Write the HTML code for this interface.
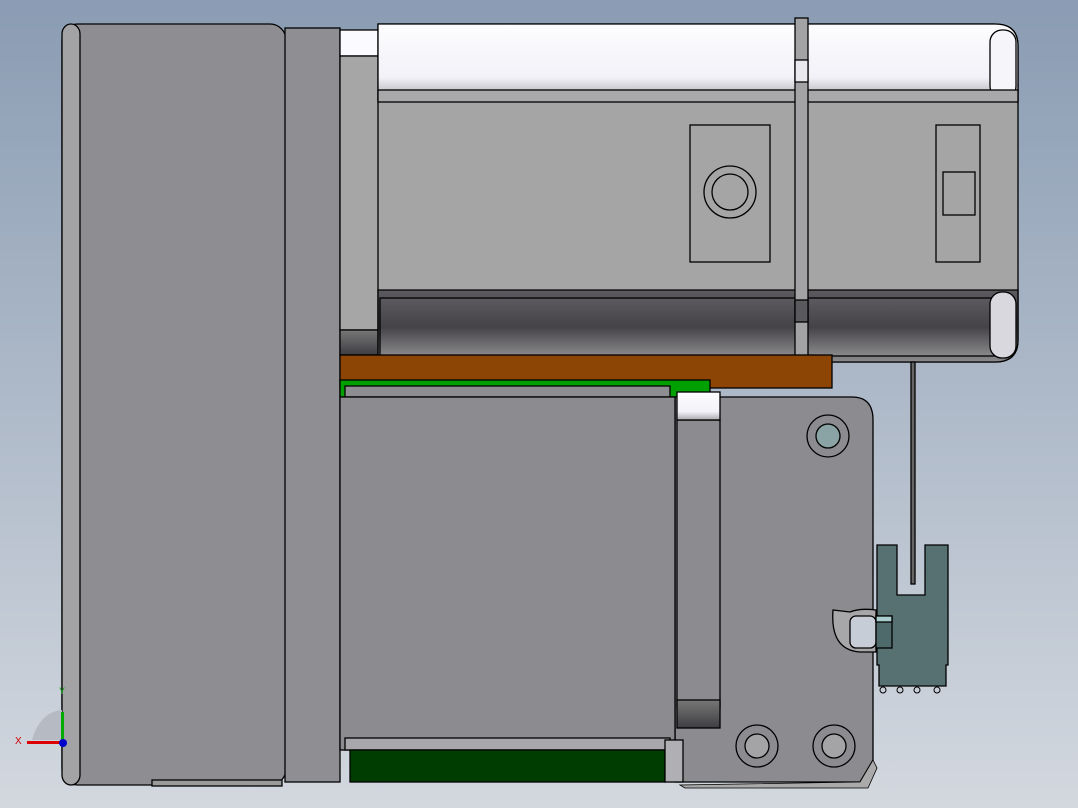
<!DOCTYPE html><html><head><style>body{margin:0}svg{display:block}</style></head><body>
<svg width="1078" height="808" viewBox="0 0 1078 808" xmlns="http://www.w3.org/2000/svg" stroke="#000" stroke-width="1.3">
<defs>
<linearGradient id="bg" x1="0" y1="0" x2="0" y2="1"><stop offset="0" stop-color="#8a9cb3"/><stop offset="1" stop-color="#d3d8df"/></linearGradient>
<linearGradient id="cyl" x1="0" y1="0" x2="0" y2="1"><stop offset="0" stop-color="#5c5a5e"/><stop offset="0.5" stop-color="#454347"/><stop offset="1" stop-color="#8a898c"/></linearGradient>
<linearGradient id="wh" x1="0" y1="0" x2="0" y2="1"><stop offset="0" stop-color="#fdfdff"/><stop offset="0.7" stop-color="#f2f2f8"/><stop offset="1" stop-color="#a9a9ae"/></linearGradient>
<linearGradient id="dk" x1="0" y1="0" x2="0" y2="1"><stop offset="0" stop-color="#777"/><stop offset="1" stop-color="#3e3d42"/></linearGradient>
</defs>
<rect width="1078" height="808" fill="url(#bg)" stroke="none"/>
<!-- left panel -->
<rect x="62" y="24" width="224" height="761" rx="16" fill="#8e8d92"/>
<rect x="62" y="24" width="18" height="761" rx="10" fill="#a3a3a6"/>
<rect x="152" y="780" width="130" height="6" fill="#9a9a9d"/>
<rect x="285" y="28" width="55" height="754" fill="#8f8e93"/>
<!-- motor -->
<rect x="340" y="30" width="40" height="26" fill="#fbfbff"/>
<rect x="340" y="56" width="40" height="274" fill="#a6a6a6"/>
<rect x="340" y="330" width="40" height="25" fill="url(#dk)"/>
<path d="M378 24 H995 Q1018 24 1018 46 V340 Q1018 362 995 362 H378 Z" fill="#a5a5a5"/>
<path d="M378 24 H995 Q1018 24 1018 46 V100 H378 Z" fill="url(#wh)"/>
<rect x="990" y="30" width="26" height="68" rx="12" fill="#f6f6fa"/>
<rect x="378" y="90" width="640" height="12" fill="#a9a9ab"/>
<path d="M378 290 H1018 V340 Q1018 362 995 362 H378 Z" fill="url(#cyl)"/>
<rect x="380" y="298" width="615" height="58" fill="url(#cyl)"/>
<rect x="990" y="292" width="26" height="66" rx="12" fill="#d8d8de"/>
<rect x="690" y="125" width="80" height="137" fill="none"/>
<circle cx="730" cy="192" r="26" fill="none"/><circle cx="730" cy="192" r="18" fill="#a5a5a5"/>
<rect x="936" y="125" width="44" height="137" fill="none"/>
<rect x="943" y="172" width="32" height="43" fill="none"/>
<rect x="795" y="18" width="13" height="347" fill="#a3a3a5"/>
<rect x="795" y="60" width="13" height="22" fill="#e8e8ee"/>
<rect x="795" y="300" width="13" height="22" fill="#5a595d"/>
<!-- orange/green -->
<rect x="340" y="355" width="492" height="33" fill="#8c4505"/>
<rect x="340" y="380" width="370" height="17" fill="#00a000"/>
<rect x="345" y="386" width="325" height="11" fill="#8e8d92"/>
<!-- right plate -->
<path d="M675 397 H852 Q873 397 873 420 V760 L860 782 H675 Z" fill="#8c8b90"/>
<path d="M873 760 L860 782 L680 785 L685 788 H868 L877 768 Z" fill="#aaa" stroke-width="0.8"/>
<rect x="677" y="420" width="43" height="288" fill="#8c8b90"/>
<rect x="677" y="700" width="43" height="28" fill="url(#dk)"/>
<rect x="677" y="392" width="43" height="28" fill="url(#wh)"/>
<circle cx="828" cy="436" r="21" fill="none"/><circle cx="828" cy="436" r="12" fill="#8aa3a4"/>
<circle cx="757" cy="746" r="21" fill="none"/><circle cx="757" cy="746" r="12" fill="#a4a4a6"/>
<circle cx="834" cy="746" r="21" fill="none"/><circle cx="834" cy="746" r="12" fill="#a4a4a6"/>
<!-- lower box -->
<rect x="340" y="397" width="335" height="353" fill="#8c8b90"/>
<rect x="345" y="738" width="325" height="12" fill="#a8a8ac"/>
<rect x="350" y="750" width="315" height="32" fill="#003d00"/>
<rect x="665" y="740" width="18" height="42" fill="#b0b0b4"/>
<!-- connector -->
<rect x="911" y="362" width="4" height="222" fill="#666"/>
<path d="M877 545 H897 V595 H925 V545 H948 V665 H946 V686 H879 V665 H877 Z" fill="#577071"/>
<path d="M833 610 Q830 650 860 652 H876 V610 Q860 608 850 612 Z" fill="#a7a7a9"/>
<rect x="850" y="616" width="26" height="32" rx="6" fill="#c7cdd6"/>
<rect x="876" y="616" width="16" height="32" fill="#4f6a6a"/>
<rect x="876" y="616" width="16" height="6" fill="#a9cccc"/>
<g fill="none" stroke-width="1"><circle cx="883" cy="690" r="3"/><circle cx="900" cy="690" r="3"/><circle cx="917" cy="690" r="3"/><circle cx="937" cy="690" r="3"/></g>
<!-- triad -->
<g stroke="none"><path d="M32 740 Q40 712 62 710 V740 Z" fill="#b5bac3"/>
<rect x="61" y="712" width="3" height="30" fill="#0a0"/><rect x="27" y="741" width="36" height="3" fill="#d00"/><circle cx="63" cy="743" r="4" fill="#00c"/>
<text x="15" y="744" font-family="Liberation Sans, sans-serif" font-size="10" fill="#c00">X</text>
<text x="59" y="694" font-family="Liberation Sans, sans-serif" font-size="9" fill="#0a0">Y</text></g>
</svg></body></html>
